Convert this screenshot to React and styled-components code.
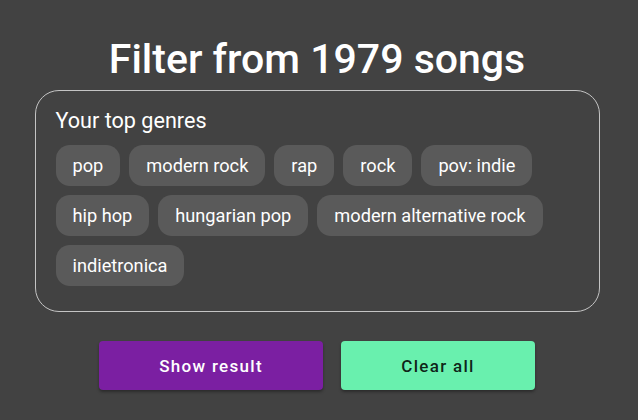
import React from 'react';
import styled, { createGlobalStyle } from 'styled-components';

const GlobalStyle = createGlobalStyle`
  html, body {
    margin: 0;
    padding: 0;
    background: #424242;
    font-family: Roboto, "Noto Sans", sans-serif;
  }
`;

const genres = [
  'pop',
  'modern rock',
  'rap',
  'rock',
  'pov: indie',
  'hip hop',
  'hungarian pop',
  'modern alternative rock',
  'indietronica',
];

const Page = styled.div`
  width: 634px;
  height: 420px;
  display: flex;
  flex-direction: column;
  align-items: center;
  padding-top: 34px;
  box-sizing: border-box;
`;

const Title = styled.h1`
  margin: 0;
  color: #fff;
  font-size: 41px;
  font-weight: 500;
  line-height: 50px;
`;

const Panel = styled.div`
  margin-top: 6px;
  width: 565px;
  box-sizing: border-box;
  border: 1px solid #c4c4c4;
  border-radius: 24px;
  padding: 17px 20px 25px;
`;

const PanelTitle = styled.div`
  color: #fff;
  font-size: 21.6px;
  line-height: 26px;
  margin-bottom: 11px;
`;

const Chips = styled.div`
  display: flex;
  flex-wrap: wrap;
  gap: 9px 9px;
`;

const Chip = styled.div`
  height: 41px;
  padding: 0 17px;
  display: flex;
  align-items: center;
  border-radius: 14px;
  background: #5a5a5a;
  color: #fff;
  font-size: 18.2px;
`;

const Actions = styled.div`
  display: flex;
  gap: 18px;
  margin-top: 29px;
`;

const Button = styled.button`
  width: ${p => p.$w}px;
  height: 49px;
  border: none;
  border-radius: 4px;
  background: ${p => p.$bg};
  color: ${p => p.$fg};
  font-family: Roboto, sans-serif;
  font-size: 17px;
  font-weight: 500;
  letter-spacing: 1.3px;
  box-shadow: 0 2px 3px rgba(0, 0, 0, 0.35);
  cursor: pointer;
`;

const App = () => {
  return (
    <Page>
      <GlobalStyle />
      <Title>Filter from 1979 songs</Title>
      <Panel>
        <PanelTitle>Your top genres</PanelTitle>
        <Chips>
          {genres.map(g => (
            <Chip key={g}>{g}</Chip>
          ))}
        </Chips>
      </Panel>
      <Actions>
        <Button $w={224} $bg="#7b1fa2" $fg="#fff">Show result</Button>
        <Button $w={194} $bg="#69f0ae" $fg="rgba(0, 0, 0, 0.87)">Clear all</Button>
      </Actions>
    </Page>
  );
};

export default App;
